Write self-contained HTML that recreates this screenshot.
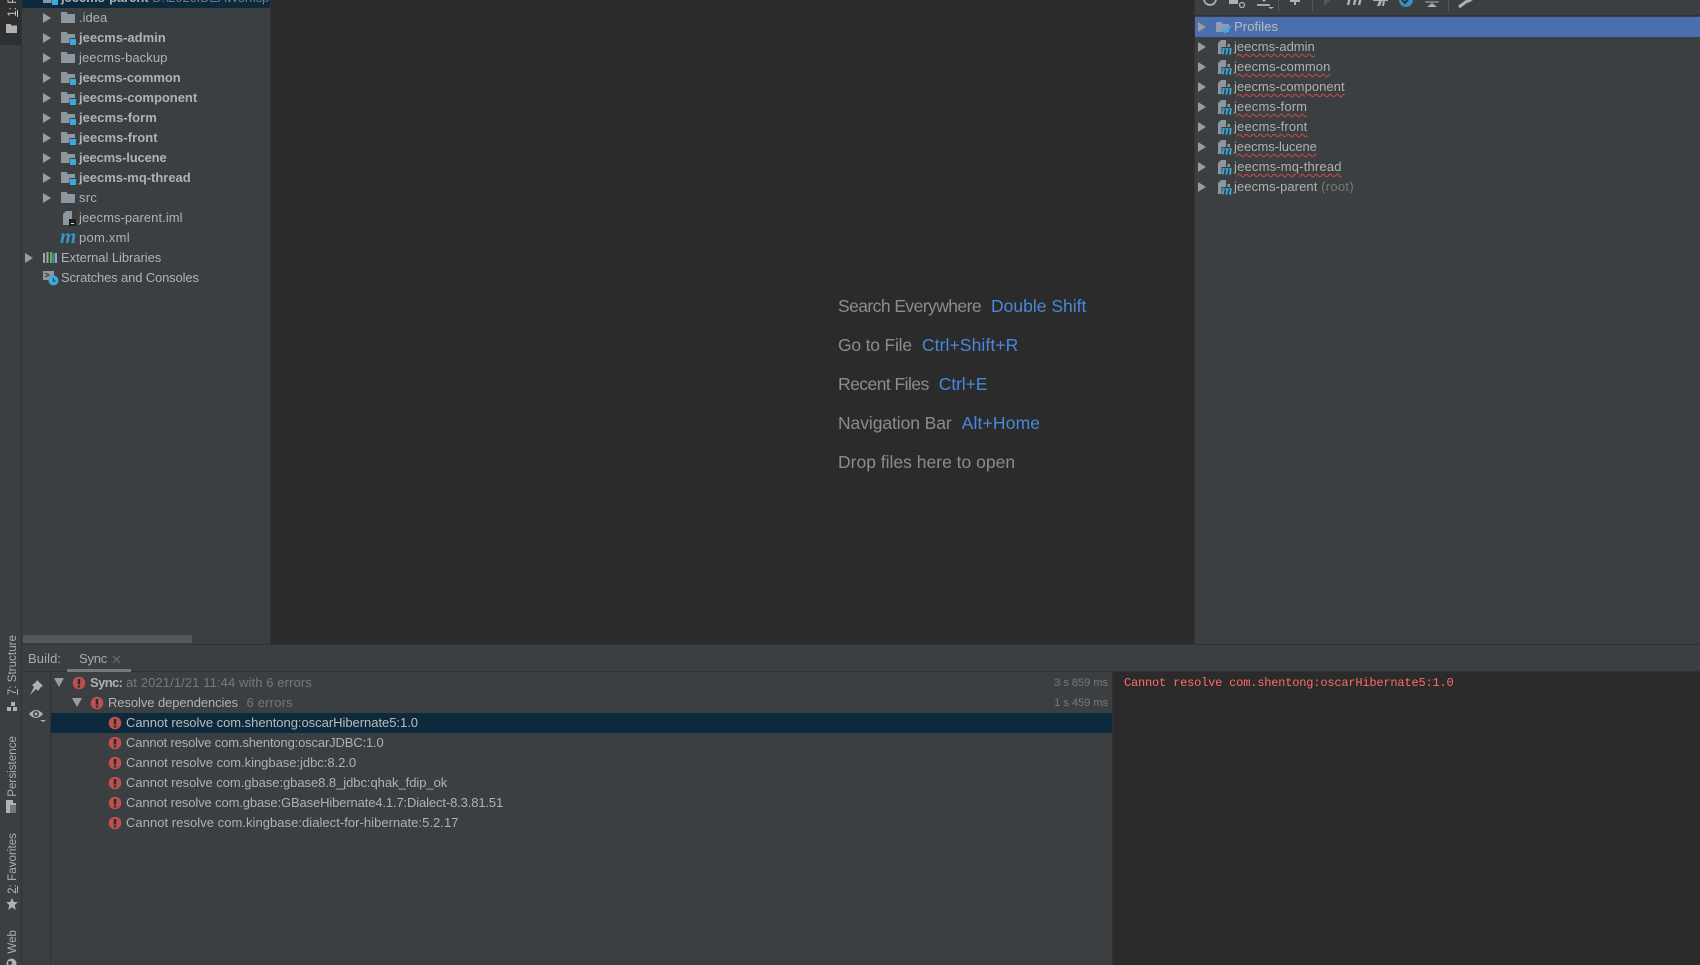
<!DOCTYPE html>
<html style="overflow:hidden;width:1700px;height:965px"><head><meta charset="utf-8"><style>
html,body{margin:0;padding:0;background:#3c3f41}
body{width:1700px;height:965px;position:relative;overflow:hidden;font-family:"Liberation Sans",sans-serif;font-size:13px;color:#afb1b3}
#r{position:absolute;left:0;top:0;width:1700px;height:965px;overflow:hidden}
.a{position:absolute}
.t{position:absolute;white-space:nowrap;line-height:20px;height:20px;letter-spacing:.25px}
.b{font-weight:bold;color:#afb1b3}
.v{position:absolute;writing-mode:vertical-rl;transform:rotate(180deg);white-space:nowrap;font-size:11.5px;line-height:14px;color:#afb1b3;letter-spacing:.06px}
.u{position:absolute;left:17px;width:1px;background:#afb1b3}
.w{text-decoration:underline wavy #d04a4a 1px;text-underline-offset:2px}
.h{position:absolute;left:838px;font-size:17.5px;line-height:24px;color:#8c8c8c;white-space:nowrap}
.h span{color:#4a88dc;margin-left:10px;letter-spacing:0}
svg{position:absolute;overflow:visible}
</style></head><body><div id="r">
<svg width="0" height="0" style="position:absolute"><defs>
<symbol id="ar" viewBox="0 0 8 10" overflow="visible"><path d="M0 0L8 5L0 10Z" fill="#9a9c9e"/></symbol>
<symbol id="fo" viewBox="0 0 14 11" overflow="visible"><path d="M0 0H5.500L7 2H14V11H0Z" fill="#8c979f"/></symbol>
<symbol id="fm" viewBox="0 0 16 13" overflow="visible"><path d="M0 0H5.500L7 2H14V11H0Z" fill="#8c979f"/><rect x="8.500" y="6" width="6.500" height="6.500" fill="#3c3f41"/><rect x="9" y="7" width="6" height="6" fill="#3aa9db"/></symbol>
<symbol id="mm" viewBox="0 0 14 15" overflow="visible"><path d="M3 0H8V7H3.500V14H0V3Z" fill="#8c979f"/><path d="M9.500 4H12V7H9.500Z" fill="#8c979f"/><text x="3.500" y="14.500" font-family="Liberation Serif,serif" font-size="14" font-style="italic" font-weight="bold" fill="#3aa9db">m</text></symbol>
<symbol id="er" viewBox="0 0 14 14" overflow="visible"><circle cx="7" cy="7" r="6.300" fill="#bd4f4f"/><rect x="5.800" y="3" width="2.400" height="5.500" fill="#2b2b2b"/><rect x="5.800" y="9.500" width="2.400" height="2" fill="#2b2b2b"/></symbol>
</defs></svg>

<!-- regions -->
<div class="a" style="left:0;top:0;width:21px;height:965px;background:#3c3f41;border-right:1px solid #323232"></div>
<div class="a" style="left:0;top:0;width:21px;height:45px;background:#2d2f30"></div>
<div class="a" style="left:270px;top:0;width:924px;height:644px;background:#2b2b2b;border-left:1px solid #323232"></div>
<div class="a" style="left:1194px;top:0;width:1px;height:644px;background:#323232"></div>
<div class="a" style="left:22px;top:644px;width:1678px;height:1px;background:#323232"></div>
<div class="a" style="left:22px;top:671px;width:1678px;height:1px;background:#323232"></div>
<div class="a" style="left:50px;top:672px;width:1px;height:293px;background:#323232"></div>
<div class="a" style="left:1195px;top:15px;width:505px;height:1px;background:#323232"></div>
<div class="a" style="left:1112px;top:672px;width:587px;height:293px;background:#2b2b2b;border-left:1px solid #323232"></div>

<!-- stripe -->
<div class="v" style="left:6px;top:-4px;color:#c4c6c8">1: P</div>
<div class="u" style="top:10px;height:7px;background:#c4c6c8"></div>
<svg style="left:6px;top:24px" width="11" height="9"><path d="M0 0H4.500L5.500 1.500H11V9H0Z" fill="#afb1b3"/></svg>
<div class="v" style="left:6px;top:635px">7: Structure</div>
<div class="u" style="top:689px;height:6px"></div>
<svg style="left:7px;top:702px" width="10" height="10"><path d="M4 0h4v4H4zM0 5h4v4H0zM6 5h4v4H6z" fill="#afb1b3"/></svg>
<div class="v" style="left:6px;top:736px">Persistence</div>
<svg style="left:6px;top:800px" width="11" height="14"><path d="M0 0h7v3h3v10H0z" fill="#afb1b3"/><path d="M4 6h7M4 8h7M4 10h7M4 12h7" stroke="#3c3f41"/></svg>
<div class="v" style="left:6px;top:833px">2: Favorites</div>
<div class="u" style="top:886px;height:7px"></div>
<svg style="left:6px;top:898px" width="12" height="12" viewBox="0 0 12 12"><path d="M6 0l1.800 4H12L8.700 7l1.100 5L6 9.300 2.200 12l1.100-5L0 4h4.200z" fill="#afb1b3"/></svg>
<div class="v" style="left:6px;top:930px">Web</div>
<svg style="left:6px;top:958px" width="11" height="11"><circle cx="5.500" cy="5.500" r="5" fill="#afb1b3"/><circle cx="4" cy="5" r="2" fill="#3c3f41"/></svg>

<!-- project tree -->
<div class="a" style="left:22px;top:0;width:248px;height:8px;background:#0d293e"></div>
<div class="t b" style="left:61px;top:-12px;letter-spacing:-.05px">jeecms-parent <span style="font-weight:normal;color:#787878;letter-spacing:-.13px">D:\2020IDEAWorksp</span></div>
<svg style="left:43px;top:-8px" width="16" height="13"><use href="#fm" width="16" height="13"/></svg>

<svg style="left:43px;top:13px" width="8" height="10"><use href="#ar" width="8" height="10"/></svg>
<svg style="left:61px;top:12px" width="14" height="11"><use href="#fo" width="14" height="11"/></svg>
<div class="t" style="left:79px;top:8px;letter-spacing:0">.idea</div>
<svg style="left:43px;top:33px" width="8" height="10"><use href="#ar" width="8" height="10"/></svg>
<svg style="left:61px;top:32px" width="16" height="13"><use href="#fm" width="16" height="13"/></svg>
<div class="t b" style="left:79px;top:28px;letter-spacing:0">jeecms-admin</div>
<svg style="left:43px;top:53px" width="8" height="10"><use href="#ar" width="8" height="10"/></svg>
<svg style="left:61px;top:52px" width="14" height="11"><use href="#fo" width="14" height="11"/></svg>
<div class="t" style="left:79px;top:48px;letter-spacing:.08px">jeecms-backup</div>
<svg style="left:43px;top:73px" width="8" height="10"><use href="#ar" width="8" height="10"/></svg>
<svg style="left:61px;top:72px" width="16" height="13"><use href="#fm" width="16" height="13"/></svg>
<div class="t b" style="left:79px;top:68px;letter-spacing:-.08px">jeecms-common</div>
<svg style="left:43px;top:93px" width="8" height="10"><use href="#ar" width="8" height="10"/></svg>
<svg style="left:61px;top:92px" width="16" height="13"><use href="#fm" width="16" height="13"/></svg>
<div class="t b" style="left:79px;top:88px;letter-spacing:-.02px">jeecms-component</div>
<svg style="left:43px;top:113px" width="8" height="10"><use href="#ar" width="8" height="10"/></svg>
<svg style="left:61px;top:112px" width="16" height="13"><use href="#fm" width="16" height="13"/></svg>
<div class="t b" style="left:79px;top:108px;letter-spacing:.05px">jeecms-form</div>
<svg style="left:43px;top:133px" width="8" height="10"><use href="#ar" width="8" height="10"/></svg>
<svg style="left:61px;top:132px" width="16" height="13"><use href="#fm" width="16" height="13"/></svg>
<div class="t b" style="left:79px;top:128px;letter-spacing:.05px">jeecms-front</div>
<svg style="left:43px;top:153px" width="8" height="10"><use href="#ar" width="8" height="10"/></svg>
<svg style="left:61px;top:152px" width="16" height="13"><use href="#fm" width="16" height="13"/></svg>
<div class="t b" style="left:79px;top:148px;letter-spacing:-.16px">jeecms-lucene</div>
<svg style="left:43px;top:173px" width="8" height="10"><use href="#ar" width="8" height="10"/></svg>
<svg style="left:61px;top:172px" width="16" height="13"><use href="#fm" width="16" height="13"/></svg>
<div class="t b" style="left:79px;top:168px;letter-spacing:-.02px">jeecms-mq-thread</div>
<svg style="left:43px;top:193px" width="8" height="10"><use href="#ar" width="8" height="10"/></svg>
<svg style="left:61px;top:192px" width="14" height="11"><use href="#fo" width="14" height="11"/></svg>
<div class="t" style="left:79px;top:188px">src</div>
<svg style="left:63px;top:211px" width="13" height="15"><path d="M3 0H9V14H0V3Z" fill="#8c979f"/><rect x="6" y="8" width="7" height="7" fill="#1e1e1e"/><rect x="8" y="12" width="3" height="1" fill="#ddd"/></svg>
<div class="t" style="left:79px;top:208px;letter-spacing:.06px">jeecms-parent.iml</div>
<div class="a" style="left:60px;top:226px;font:italic bold 21px/20px 'Liberation Serif',serif;color:#3592c4">m</div>
<div class="t" style="left:79px;top:228px">pom.xml</div>
<svg style="left:25px;top:253px" width="8" height="10"><use href="#ar" width="8" height="10"/></svg>
<svg style="left:43px;top:252px" width="14" height="11"><path d="M1 1v10M4.500 0v11M13 1v10" stroke="#9aa7b0" stroke-width="2"/><path d="M8 0v11" stroke="#62b543" stroke-width="2"/><path d="M10.500 1v10" stroke="#3592c4" stroke-width="2"/></svg>
<div class="t" style="left:61px;top:248px;letter-spacing:-.05px">External Libraries</div>
<svg style="left:43px;top:271px" width="16" height="15"><path d="M0 0H11V9H0Z" fill="#8c979f"/><path d="M2 2l4 2-4 2" stroke="#3c3f41" fill="none"/><circle cx="10.500" cy="9.500" r="5" fill="#3aa9db"/><path d="M10.500 7v3h2" stroke="#2b2b2b" fill="none"/></svg>
<div class="t" style="left:61px;top:268px;letter-spacing:-.14px">Scratches and Consoles</div>
<div class="a" style="left:23px;top:635px;width:169px;height:8px;background:#55585a"></div>

<!-- editor hints -->
<div class="h" style="top:294px;letter-spacing:-.57px">Search Everywhere<span>Double Shift</span></div>
<div class="h" style="top:333px;letter-spacing:-.2px">Go to File<span style="letter-spacing:.1px">Ctrl+Shift+R</span></div>
<div class="h" style="top:372px;letter-spacing:-.54px">Recent Files<span style="letter-spacing:-.1px">Ctrl+E</span></div>
<div class="h" style="top:411px;letter-spacing:-.08px">Navigation Bar<span style="letter-spacing:.15px">Alt+Home</span></div>
<div class="h" style="top:450px">Drop files here to open</div>

<!-- maven toolbar -->
<svg style="left:1195px;top:0" width="290" height="15" fill="none">
<path d="M9 -1a6 6 0 0 0 12 0" stroke="#afb1b3" stroke-width="1.800"/><path d="M17 0H23V-5Z" fill="#afb1b3"/>
<path d="M34 -4H43V4H34Z" fill="#afb1b3"/><circle cx="47" cy="5" r="2.500" fill="#3c3f41" stroke="#afb1b3" stroke-width="1.300"/>
<path d="M64 -3L69 2L74 -3Z" fill="#afb1b3"/><path d="M62 5H75" stroke="#afb1b3" stroke-width="1.800"/><path d="M73 7H79L76 9Z" fill="#afb1b3"/>
<path d="M83.500 0V11M117.500 0V11M253.500 0V11" stroke="#515658"/>
<path d="M95 1H105M100 -4V5" stroke="#afb1b3" stroke-width="2"/>
<path d="M129 -3H139L129 6Z" fill="#55585a"/>
<path d="M153 5L155 -3M159 5L161 -3M164 5L166 -3" stroke="#afb1b3" stroke-width="2.400"/>
<path d="M178 -3H193V1H178Z" fill="#afb1b3"/><path d="M184 1L182 6H185L187 1ZM188 1L187 6H189L190 1Z" fill="#afb1b3"/>
<circle cx="211" cy="0" r="7" fill="#3592c4"/><path d="M207 0l3 3 5-6" stroke="#2b2b2b" stroke-width="1.800"/>
<path d="M230 2H244" stroke="#afb1b3" stroke-width="1"/><path d="M237 3L232 7H242Z" fill="#afb1b3"/>
<path d="M264 7L272 1" stroke="#afb1b3" stroke-width="3"/><path d="M270 -3H278V0L273 3Z" fill="#afb1b3"/>
</svg>

<!-- maven tree -->
<div class="a" style="left:1195px;top:17px;width:505px;height:20px;background:#4b6eaf"></div>
<svg style="left:1198px;top:22px" width="8" height="10"><use href="#ar" width="8" height="10"/></svg>
<svg style="left:1216px;top:22px" width="15" height="11"><path d="M0 0H5L7 2H13V10H0Z" fill="#8c9cb2"/><path d="M6.500 7l3 3 5-6" stroke="#3aa9e8" stroke-width="2.500" fill="none"/></svg>
<div class="t" style="left:1234px;top:17px;color:#bbbbbb;letter-spacing:.1px">Profiles</div>
<svg style="left:1198px;top:42px" width="8" height="10"><use href="#ar" width="8" height="10"/></svg>
<svg style="left:1218px;top:40px" width="14" height="15"><use href="#mm" width="14" height="15"/></svg>
<div class="t" style="left:1234px;top:37px;letter-spacing:-.02px"><span class="w">jeecms-admin</span></div>
<svg style="left:1198px;top:62px" width="8" height="10"><use href="#ar" width="8" height="10"/></svg>
<svg style="left:1218px;top:60px" width="14" height="15"><use href="#mm" width="14" height="15"/></svg>
<div class="t" style="left:1234px;top:57px;letter-spacing:.08px"><span class="w">jeecms-common</span></div>
<svg style="left:1198px;top:82px" width="8" height="10"><use href="#ar" width="8" height="10"/></svg>
<svg style="left:1218px;top:80px" width="14" height="15"><use href="#mm" width="14" height="15"/></svg>
<div class="t" style="left:1234px;top:77px;letter-spacing:.05px"><span class="w">jeecms-component</span></div>
<svg style="left:1198px;top:102px" width="8" height="10"><use href="#ar" width="8" height="10"/></svg>
<svg style="left:1218px;top:100px" width="14" height="15"><use href="#mm" width="14" height="15"/></svg>
<div class="t" style="left:1234px;top:97px;letter-spacing:.15px"><span class="w">jeecms-form</span></div>
<svg style="left:1198px;top:122px" width="8" height="10"><use href="#ar" width="8" height="10"/></svg>
<svg style="left:1218px;top:120px" width="14" height="15"><use href="#mm" width="14" height="15"/></svg>
<div class="t" style="left:1234px;top:117px;letter-spacing:.16px"><span class="w">jeecms-front</span></div>
<svg style="left:1198px;top:142px" width="8" height="10"><use href="#ar" width="8" height="10"/></svg>
<svg style="left:1218px;top:140px" width="14" height="15"><use href="#mm" width="14" height="15"/></svg>
<div class="t" style="left:1234px;top:137px;letter-spacing:-.08px"><span class="w">jeecms-lucene</span></div>
<svg style="left:1198px;top:162px" width="8" height="10"><use href="#ar" width="8" height="10"/></svg>
<svg style="left:1218px;top:160px" width="14" height="15"><use href="#mm" width="14" height="15"/></svg>
<div class="t" style="left:1234px;top:157px;letter-spacing:.18px"><span class="w">jeecms-mq-thread</span></div>
<svg style="left:1198px;top:182px" width="8" height="10"><use href="#ar" width="8" height="10"/></svg>
<svg style="left:1218px;top:180px" width="14" height="15"><use href="#mm" width="14" height="15"/></svg>
<div class="t" style="left:1234px;top:177px;letter-spacing:.08px">jeecms-parent <span style="color:#787878;letter-spacing:.3px">(root)</span></div>

<!-- build panel -->
<div class="t" style="left:28px;top:649px;color:#a8aaac;letter-spacing:.1px">Build:</div>
<div class="t" style="left:79px;top:649px;color:#a8aaac;letter-spacing:-.2px">Sync</div>
<svg style="left:112px;top:655px" width="9" height="9"><path d="M1 1L8 8M8 1L1 8" stroke="#6e7072" stroke-width="1.200"/></svg>
<div class="a" style="left:67px;top:669px;width:64px;height:3px;background:#747a80"></div>
<svg style="left:28px;top:680px" width="15" height="15"><path d="M9 0L15 6L13 7L10 11L8 9L2 15L6 7L4 5L8 2Z" fill="#afb1b3"/></svg>
<svg style="left:29px;top:708px" width="17" height="14" fill="none"><path d="M0 6Q7 -2 14 6Q7 14 0 6Z" fill="#afb1b3"/><circle cx="7" cy="6" r="3" fill="#3c3f41"/><circle cx="7" cy="6" r="1.500" fill="#afb1b3"/><path d="M11 12h6l-3 2z" fill="#afb1b3"/></svg>

<svg style="left:54px;top:678px" width="10" height="9"><path d="M0 0H10L5 9Z" fill="#9a9c9e"/></svg>
<svg style="left:72px;top:676px" width="14" height="14"><use href="#er" width="14" height="14"/></svg>
<div class="t" style="left:90px;top:673px;letter-spacing:0"><b style="letter-spacing:-.6px">Sync:</b> <span style="color:#787878;letter-spacing:.1px">at 2021/1/21 11:44 with 6 errors</span></div>
<div class="t" style="right:592px;top:673px;font-size:11px;letter-spacing:0;color:#787878">3 s 859 ms</div>
<svg style="left:72px;top:698px" width="10" height="9"><path d="M0 0H10L5 9Z" fill="#9a9c9e"/></svg>
<svg style="left:90px;top:696px" width="14" height="14"><use href="#er" width="14" height="14"/></svg>
<div class="t" style="left:108px;top:693px;letter-spacing:-.08px">Resolve dependencies <span style="color:#787878;margin-left:5px;letter-spacing:.2px">6 errors</span></div>
<div class="t" style="right:592px;top:693px;font-size:11px;letter-spacing:0;color:#787878">1 s 459 ms</div>
<div class="a" style="left:51px;top:713px;width:1061px;height:20px;background:#0d293e"></div>
<svg style="left:108px;top:716px" width="14" height="14"><use href="#er" width="14" height="14"/></svg>
<div class="t" style="left:126px;top:713px;color:#bbbbbb;letter-spacing:-.03px">Cannot resolve com.shentong:oscarHibernate5:1.0</div>
<svg style="left:108px;top:736px" width="14" height="14"><use href="#er" width="14" height="14"/></svg>
<div class="t" style="left:126px;top:733px;letter-spacing:-.15px">Cannot resolve com.shentong:oscarJDBC:1.0</div>
<svg style="left:108px;top:756px" width="14" height="14"><use href="#er" width="14" height="14"/></svg>
<div class="t" style="left:126px;top:753px;letter-spacing:-.03px">Cannot resolve com.kingbase:jdbc:8.2.0</div>
<svg style="left:108px;top:776px" width="14" height="14"><use href="#er" width="14" height="14"/></svg>
<div class="t" style="left:126px;top:773px;letter-spacing:-.05px">Cannot resolve com.gbase:gbase8.8_jdbc:qhak_fdip_ok</div>
<svg style="left:108px;top:796px" width="14" height="14"><use href="#er" width="14" height="14"/></svg>
<div class="t" style="left:126px;top:793px;letter-spacing:-.13px">Cannot resolve com.gbase:GBaseHibernate4.1.7:Dialect-8.3.81.51</div>
<svg style="left:108px;top:816px" width="14" height="14"><use href="#er" width="14" height="14"/></svg>
<div class="t" style="left:126px;top:813px;letter-spacing:.04px">Cannot resolve com.kingbase:dialect-for-hibernate:5.2.17</div>

<div class="a" style="left:1124px;top:674px;font:12px/18px 'Liberation Mono',monospace;color:#ff6b68;white-space:nowrap;letter-spacing:-.19px">Cannot resolve com.shentong:oscarHibernate5:1.0</div>
</div></body></html>
